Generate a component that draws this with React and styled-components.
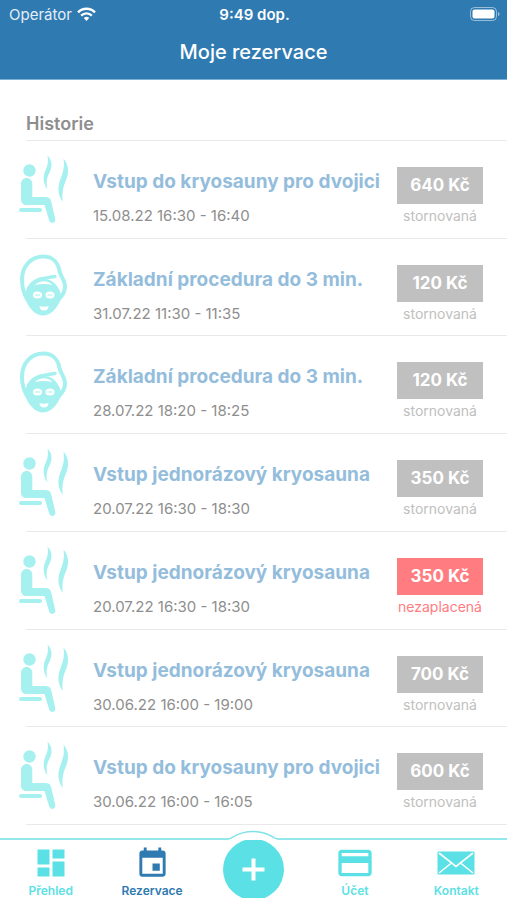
import React from 'react'
import styled, { createGlobalStyle } from 'styled-components'
import { MdDashboard, MdEvent, MdCreditCard } from 'react-icons/md'

const colors = {
    primary: "#307ab2",
    title: "#94bddc",
    accent: "#5be1e5",
    accentLight: "#a6f1f0",
    muted: "#8e8e8e",
    cancelled: "#c0c0c0",
    unpaid: "#ff7c80",
    line: "#e9e9e9"
}

const GlobalStyle = createGlobalStyle`
    * {
        box-sizing: border-box;
    }
    body {
        margin: 0;
        background-color: white;
        font-family: Inter, "Liberation Sans", sans-serif;
    }
    button {
        font: inherit;
    }
`

const Page = styled.div`
    display: flex;
    flex-direction: column;
    min-height: 100vh;
`

const Header = styled.header`
    color: white;
    background-color: ${colors.primary};
    border-bottom: 1px solid #7fb0d4;
`

const StatusBar = styled.div`
    display: grid;
    grid-template-columns: 1fr auto 1fr;
    align-items: center;
    height: 28px;
    padding: 0 7px 0 9px;
    font-size: 15px;
`

const Carrier = styled.div`
    display: flex;
    align-items: center;
    gap: 5px;
    color: #e3eef6;
`

const Clock = styled.div`
    font-weight: 600;
`

const Battery = styled.div`
    display: flex;
    justify-content: flex-end;
`

const Heading = styled.h1`
    margin: 0;
    padding: 11px 0 14px;
    font-size: 20px;
    line-height: 26px;
    font-weight: 500;
    text-align: center;
`

const Main = styled.main`
    display: flex;
    flex: 1;
    flex-direction: column;
    padding: 31px 0 13px 26px;
`

const SectionTitle = styled.h2`
    margin: 0;
    padding-bottom: 3px;
    font-size: 18px;
    line-height: 26px;
    font-weight: 600;
    color: ${colors.muted};
    border-bottom: 1px solid ${colors.line};
`

const List = styled.ul`
    display: flex;
    flex: 1;
    flex-direction: column;
    list-style: none;
    margin: 0;
    padding: 0;
`

const Item = styled.li`
    display: flex;
    flex: 1;
    align-items: flex-start;
    padding: 13px 24px 10px 0;
    border-bottom: 1px solid ${colors.line};
`

const Picture = styled.div`
    flex: none;
    width: 50px;
    margin: 0 24px 0 -7px;
    color: ${colors.accentLight};

    svg {
        display: block;
    }
`

const Info = styled.div`
    flex: 1;
    min-width: 0;
    padding-top: 14px;
`

const Name = styled.h3`
    margin: 0;
    font-size: 19px;
    line-height: 28px;
    font-weight: 700;
    white-space: nowrap;
    color: ${colors.title};
`

const Time = styled.div`
    padding-top: 10px;
    font-size: 15px;
    line-height: 20px;
    color: ${colors.muted};
`

const Payment = styled.div`
    display: flex;
    flex: none;
    flex-direction: column;
    align-items: center;
    width: 86px;
    padding-top: 13px;
`

const Price = styled.div`
    width: 100%;
    font-size: 17px;
    line-height: 37px;
    font-weight: 700;
    text-align: center;
    color: white;
    background-color: ${({ color }) => color};
`

const State = styled.div`
    padding-top: 2px;
    font-size: 14px;
    line-height: 20px;
    color: ${({ color }) => color};
`

const Nav = styled.nav`
    display: grid;
    grid-template-columns: repeat(5, 1fr);
    height: 62px;
    background-color: white;
    border-top: 2px solid #92e8eb;
`

const NavButton = styled.button`
    display: flex;
    flex-direction: column;
    align-items: center;
    justify-content: flex-end;
    gap: 4px;
    padding: 0;
    border: none;
    background: none;
    color: ${({ $active }) => $active ? colors.primary : colors.accent};
`

const NavIcon = styled.span`
    display: flex;
    align-items: center;
    justify-content: center;
    height: 30px;
`

const NavLabel = styled.span`
    font-size: 12px;
    line-height: 18px;
    font-weight: 600;
`

const AddCell = styled.div`
    position: relative;
    display: flex;
    justify-content: center;
`

const Bump = styled.svg`
    position: absolute;
    top: -10px;
    left: 50%;
    transform: translateX(-50%);
`

const AddButton = styled.button`
    position: relative;
    width: 61px;
    height: 58px;
    padding: 0;
    border: none;
    background: none;
    color: ${colors.accent};

    svg {
        display: block;
    }
`

const SaunaIcon = () => (
    <svg width="50" height="70" viewBox="0 0 50 70" fill="currentColor" aria-hidden="true">
        <circle cx="10.500" cy="16.500" r="6.200" />
        <path d="M2 30c0-3.600 2.400-6 5.700-6s5.600 2.400 5.600 6v13h13.200c2.900 0 4.500 1 5.500 3.600l4.200 18.200c.5 2-.3 3.500-2 4s-3.300-.3-4-2.200L25.500 51H8c-3.800 0-6-2-6-5.500z" />
        <rect x="0" y="54" width="23" height="4" rx="2" />
        <path d="M28.500 1.500c4.500 4.500 5.200 10.500 2.300 16.500-2.800 5-4.100 10-2.300 17.500-4.500-6-5-13-1.700-20 2.200-4.800 2.600-8.700 1.700-14z" />
        <path d="M44.500 4.500c5 6 5.800 13 2.800 21-3.400 7.500-4.600 14-3.500 22.500-5.300-7-5.600-15-1.900-24 2.800-7 3.600-12.500 2.600-19.500z" />
    </svg>
)

const FaceIcon = () => (
    <svg width="50" height="66" viewBox="0 0 50 66" fill="none" stroke="currentColor" aria-hidden="true">
        <path
            d="M8 47C4.500 41 3 35 3 28 3 14 12 4.500 24.500 4.500 33 4.500 39 10 40.500 19c.8 5 5.500 9 5.500 15.500 0 4.500-2 8.500-6 12.500"
            strokeWidth="4"
        />
        <path
            d="M7 44C8 34 15 27 25 27c8 0 14 6 16.500 14l1 4c-2 8-9.500 18.500-18 18.500S10 56 6 47z"
            fill="currentColor"
            stroke="none"
        />
        <path d="M16 33c5-5 13-5 17.500 0-6-1.500-11.500-1.500-17.500 0z" fill="white" stroke="none" />
        <path d="M8 41c2-8 8-13 16-14.500 4-.7 7-1.500 12-2" strokeWidth="3.500" strokeLinecap="round" />
        <g fill="white" stroke="none">
            <ellipse cx="18.500" cy="43" rx="4.500" ry="3.500" />
            <ellipse cx="31" cy="43" rx="4.500" ry="3.500" />
            <path d="M20.500 54q4.500 1.500 9 0c0 3-2 4.500-4.500 4.500s-4.500-1.500-4.500-4.500z" />
        </g>
        <path d="M16 43h5M28.500 43h5" strokeWidth="1" />
    </svg>
)

const WifiIcon = () => (
    <svg width="19" height="14" viewBox="0 0 19 14" fill="none" stroke="white" strokeWidth="2.400" aria-hidden="true">
        <path d="M1 5.300a12 12 0 0 1 17 0" />
        <path d="M4.200 8.600a7.500 7.500 0 0 1 10.600 0" />
        <path d="M6.800 11a4 4 0 0 1 5.400 0L9.500 14z" fill="white" stroke="none" />
    </svg>
)

const BatteryIcon = () => (
    <svg width="30" height="14" viewBox="0 0 30 14" aria-hidden="true">
        <rect x=".5" y=".5" width="26" height="13" rx="4" fill="none" stroke="white" strokeOpacity=".5" />
        <rect x="2.500" y="2.500" width="22" height="9" rx="2" fill="white" />
        <path d="M28 5c2 .6 2 3.400 0 4z" fill="white" fillOpacity=".5" />
    </svg>
)

const MailIcon = () => (
    <svg width="38" height="24" viewBox="0 0 38 24" aria-hidden="true">
        <rect x=".5" y=".5" width="37" height="23" rx="1" fill="currentColor" />
        <path d="M2 2l17 13.500L36 2M2 22l12.500-10M36 22L23.500 12" fill="none" stroke="white" strokeWidth="1.600" />
    </svg>
)

const states = {
    cancelled: { text: "stornovaná", color: colors.cancelled },
    unpaid: { text: "nezaplacená", color: colors.unpaid }
}

const reservations = [
    { id: 1, icon: SaunaIcon, name: "Vstup do kryosauny pro dvojici", time: "15.08.22 16:30 - 16:40", price: 640, state: "cancelled" },
    { id: 2, icon: FaceIcon, name: "Základní procedura do 3 min.", time: "31.07.22 11:30 - 11:35", price: 120, state: "cancelled" },
    { id: 3, icon: FaceIcon, name: "Základní procedura do 3 min.", time: "28.07.22 18:20 - 18:25", price: 120, state: "cancelled" },
    { id: 4, icon: SaunaIcon, name: "Vstup jednorázový kryosauna", time: "20.07.22 16:30 - 18:30", price: 350, state: "cancelled" },
    { id: 5, icon: SaunaIcon, name: "Vstup jednorázový kryosauna", time: "20.07.22 16:30 - 18:30", price: 350, state: "unpaid" },
    { id: 6, icon: SaunaIcon, name: "Vstup jednorázový kryosauna", time: "30.06.22 16:00 - 19:00", price: 700, state: "cancelled" },
    { id: 7, icon: SaunaIcon, name: "Vstup do kryosauny pro dvojici", time: "30.06.22 16:00 - 16:05", price: 600, state: "cancelled" }
]

const Reservation = ({ icon: Icon, name, time, price, state }) => (
    <Item>
        <Picture><Icon /></Picture>
        <Info>
            <Name>{name}</Name>
            <Time>{time}</Time>
        </Info>
        <Payment>
            <Price color={states[state].color}>{price} Kč</Price>
            <State color={states[state].color}>{states[state].text}</State>
        </Payment>
    </Item>
)

const NavItem = ({ icon, text, active }) => (
    <NavButton type="button" $active={active}>
        <NavIcon>{icon}</NavIcon>
        <NavLabel>{text}</NavLabel>
    </NavButton>
)

const App = () => (
    <Page>
        <GlobalStyle />
        <Header>
            <StatusBar>
                <Carrier>Operátor <WifiIcon /></Carrier>
                <Clock>9:49 dop.</Clock>
                <Battery><BatteryIcon /></Battery>
            </StatusBar>
            <Heading>Moje rezervace</Heading>
        </Header>
        <Main>
            <SectionTitle>Historie</SectionTitle>
            <List>
                {reservations.map(item => (
                    <Reservation key={item.id} {...item} />
                ))}
            </List>
        </Main>
        <Nav>
            <NavItem icon={<MdDashboard size={36} />} text="Přehled" />
            <NavItem icon={<MdEvent size={35} />} text="Rezervace" active />
            <AddCell>
                <Bump width="50" height="12" viewBox="0 0 50 12" aria-hidden="true">
                    <path d="M0 9C4 9 9 1.500 25 1.500S46 9 50 9v3H0z" fill="white" />
                    <path d="M0 9C4 9 9 1.500 25 1.500S46 9 50 9" fill="none" stroke="#7fe3e8" strokeWidth="1.500" />
                </Bump>
                <AddButton type="button" aria-label="Nová rezervace">
                    <svg width="61" height="58" viewBox="0 0 61 58" aria-hidden="true">
                        <circle cx="30.500" cy="29.500" r="30.500" fill="currentColor" />
                        <path d="M30.500 18.500v22M19.500 29.500h22" stroke="white" strokeWidth="4" />
                    </svg>
                </AddButton>
            </AddCell>
            <NavItem icon={<MdCreditCard size={40} />} text="Účet" />
            <NavItem icon={<MailIcon />} text="Kontakt" />
        </Nav>
    </Page>
)

export default App
